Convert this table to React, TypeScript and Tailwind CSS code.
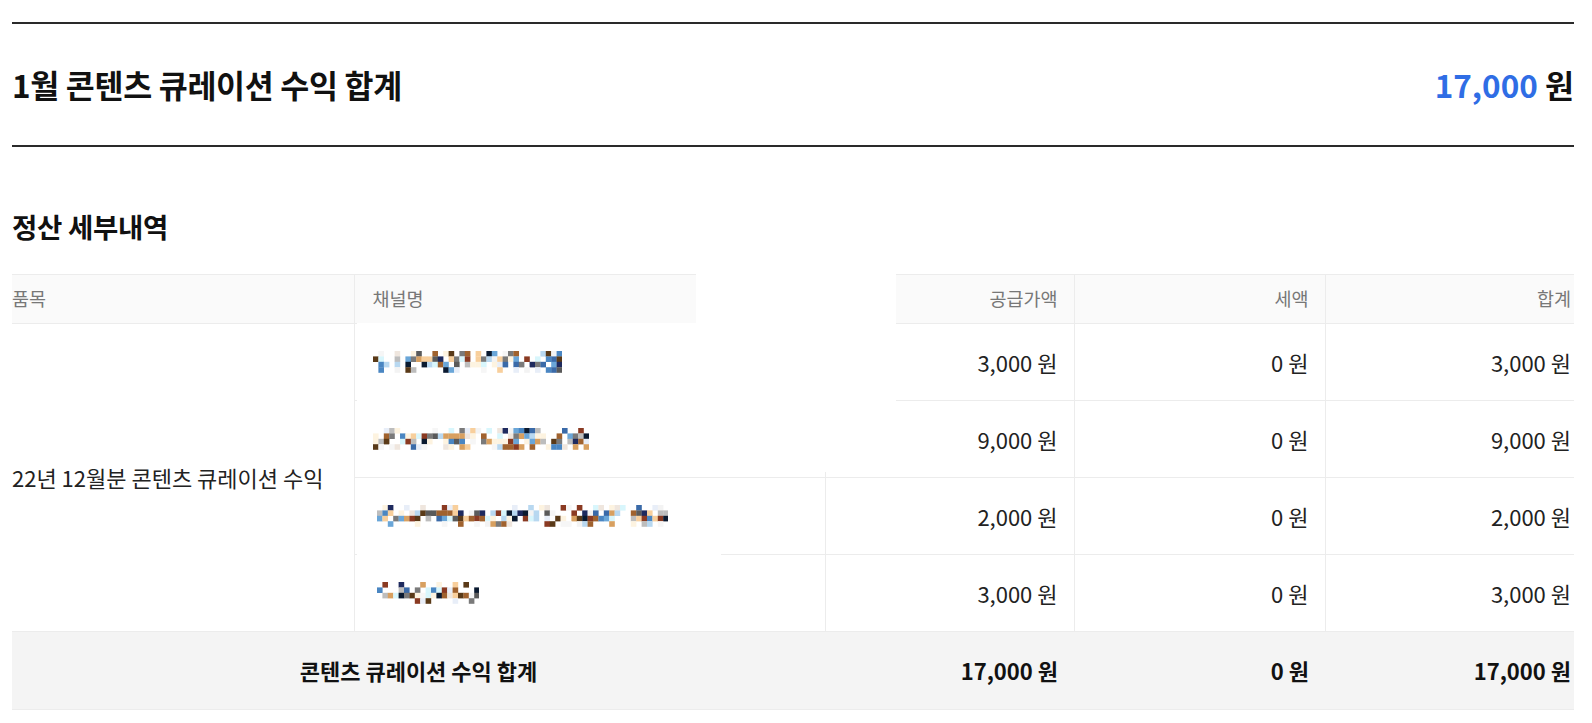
import React from 'react';

const font = { fontFamily: '"Noto Sans CJK KR", "Noto Sans", sans-serif' };

const palette = [
  '#a0622e', '#4a86c2', '#1e2a5e', '#8a3a22', '#f8cf9c', '#7a7a7a', '#b8d8f0', '#d8f6fc',
  '#5a3a18', '#5a5a5a', '#d8a060', '#0a1a30', '#6aa6d8', '#3a6aa8', '#bdbdbd', '#fdf3e0',
];
const faint = ['#f3f3f3', '#fdf3e0', '#e8eef8', '#efe6de', '#f6f6f6'];

// blurred channel name, drawn as a pixel mosaic
const Mosaic: React.FC<{ cols: number; seed: number }> = ({ cols, seed }) => {
  let s = seed;
  const rnd = () => {
    s = (s * 16807) % 2147483647;
    return s / 2147483647;
  };
  const size = 5.4;
  const cells: React.ReactNode[] = [];
  for (let r = 0; r < 4; r++) {
    for (let c = 0; c < cols; c++) {
      const v = rnd();
      const edge = r === 0 || r === 3;
      const blank = edge ? 0.72 : 0.32;
      let fill: string | null = null;
      if (v < blank) {
        if (rnd() < 0.25) fill = faint[Math.floor(rnd() * faint.length)];
      } else {
        fill = palette[Math.floor(rnd() * palette.length)];
      }
      if (fill)
        cells.push(
          <rect key={`${r}-${c}`} x={c * size} y={r * size} width={size + 0.2} height={size + 0.2} fill={fill} />
        );
    }
  }
  return (
    <svg width={cols * size} height={4 * size} className="relative z-10 block">
      {cells}
    </svg>
  );
};

const rows = [
  { cols: 35, seed: 11, pl: 'pl-[18px]', supply: '3,000 원', tax: '0 원', total: '3,000 원' },
  { cols: 40, seed: 97, pl: 'pl-[18px]', supply: '9,000 원', tax: '0 원', total: '9,000 원' },
  { cols: 54, seed: 301, pl: 'pl-[22px]', supply: '2,000 원', tax: '0 원', total: '2,000 원' },
  { cols: 19, seed: 733, pl: 'pl-[22px]', supply: '3,000 원', tax: '0 원', total: '3,000 원' },
];

export default function App() {
  return (
    <div className="relative min-h-[723px] bg-white pl-[12px] pr-[18px] pt-[22px] text-[#111]" style={font}>
      <div className="flex h-[125px] items-center justify-between border-y-2 border-[#2a2a2a]">
        <h1 className="text-[31.5px] font-bold tracking-[-0.3px]">1월 콘텐츠 큐레이션 수익 합계</h1>
        <div className="text-[31.5px] font-bold">
          <span className="text-[#2f6de5]">17,000</span> 원
        </div>
      </div>

      <h2 className="mt-[61px] h-[36px] text-[27.5px] font-bold leading-[36px] tracking-[-0.3px]">정산 세부내역</h2>

      <table className="mt-[30px] w-full table-fixed border-collapse text-[22px] text-[#222]">
        <colgroup>
          <col className="w-[342px]" />
          <col className="w-[471px]" />
          <col className="w-[249px]" />
          <col className="w-[251px]" />
          <col />
        </colgroup>
        <thead>
          <tr className="h-[49px] border-t border-[#ececec] bg-[#fafafa] text-[18.5px] text-[#777]">
            <th className="text-left font-normal">품목</th>
            <th className="border-l border-[#ececec] pl-[18px] text-left font-normal">채널명</th>
            <th className="border-l border-[#ececec] pr-4 text-right font-normal">공급가액</th>
            <th className="border-l border-[#ececec] pr-4 text-right font-normal">세액</th>
            <th className="border-l border-[#ececec] pr-[3px] text-right font-normal">합계</th>
          </tr>
        </thead>
        <tbody>
          {rows.map((r, i) => (
            <tr key={i} className="h-[77px] border-t border-[#ececec]">
              {i === 0 && (
                <td rowSpan={4} className="align-middle">
                  22년 12월분 콘텐츠 큐레이션 수익
                </td>
              )}
              <td className={`border-l border-[#ececec] ${r.pl} align-middle`}>
                <Mosaic cols={r.cols} seed={r.seed} />
              </td>
              <td className="border-l border-[#ececec] pr-4 text-right">{r.supply}</td>
              <td className="border-l border-[#ececec] pr-4 text-right">{r.tax}</td>
              <td className="border-l border-[#ececec] pr-[3px] text-right">{r.total}</td>
            </tr>
          ))}
          <tr className="h-[78px] border-y border-[#ececec] bg-[#f4f4f4] font-bold text-[#111]">
            <td colSpan={2} className="text-center">
              콘텐츠 큐레이션 수익 합계
            </td>
            <td className="pr-4 text-right">17,000 원</td>
            <td className="pr-4 text-right">0 원</td>
            <td className="pr-[3px] text-right">17,000 원</td>
          </tr>
        </tbody>
      </table>

      {/* redaction patches over the channel area */}
      <div className="absolute left-[696px] top-[273px] h-[50px] w-[200px] bg-white" />
      <div className="absolute left-[357px] top-[323px] h-[149px] w-[539px] bg-white" />
      <div className="absolute left-[357px] top-[478px] h-[144px] w-[364px] bg-white" />
    </div>
  );
}
